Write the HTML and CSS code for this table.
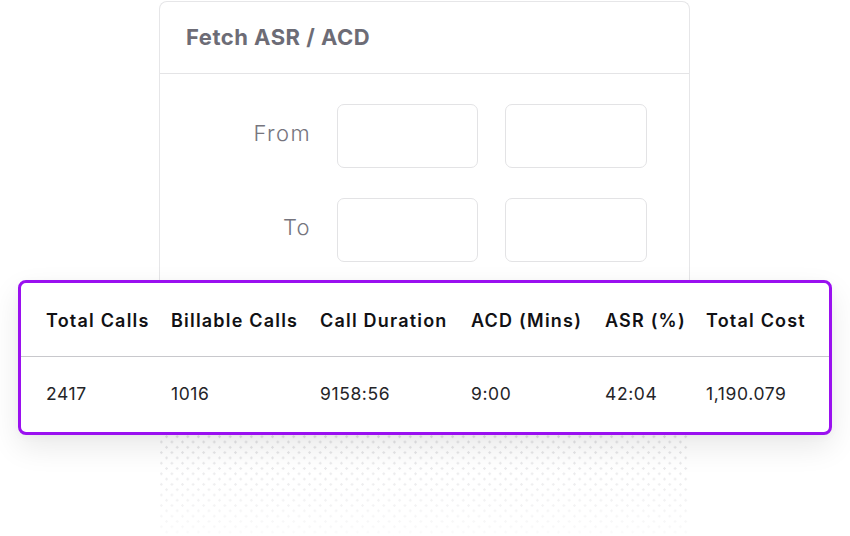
FILE: index.html
```html
<!DOCTYPE html>
<html>
<head>
<meta charset="utf-8">
<link rel="stylesheet" href="styles.css">
</head>
<body>
<div class="stage">
  <div class="card">
    <div class="card-head">Fetch ASR / ACD</div>
    <div class="card-body">
      <div class="label">From</div>
      <div class="field"></div>
      <div class="field"></div>
      <div class="label">To</div>
      <div class="field"></div>
      <div class="field"></div>
    </div>
  </div>
  <div class="dots"></div>

  <div class="result">
    <div class="row head">
      <div>Total Calls</div>
      <div>Billable Calls</div>
      <div>Call Duration</div>
      <div>ACD (Mins)</div>
      <div>ASR (%)</div>
      <div>Total Cost</div>
    </div>
    <div class="row data">
      <div>2417</div>
      <div>1016</div>
      <div>9158:56</div>
      <div>9:00</div>
      <div>42:04</div>
      <div>1,190.079</div>
    </div>
  </div>
</div>
</body>
</html>
```

FILE: styles.css
```css
* { box-sizing: border-box; }

html, body {
  margin: 0;
  padding: 0;
  background: #ffffff;
  width: 850px;
  height: 536px;
  overflow: hidden;
  font-family: "Inter", "Noto Sans", sans-serif;
}

.stage {
  position: relative;
  width: 850px;
  height: 536px;
  padding-top: 1px;
}

.card {
  margin-left: 159px;
  width: 531px;
  height: 300px;
  border: 1px solid #e6e6e8;
  border-bottom: none;
  border-radius: 8px 8px 0 0;
  background: #fff;
}

.card-head {
  height: 72px;
  border-bottom: 1px solid #e4e4e6;
  padding-left: 26px;
  padding-bottom: 2px;
  display: flex;
  align-items: center;
  font-size: 22px;
  font-weight: 700;
  color: #6d6c76;
  letter-spacing: 0.5px;
}

.card-body {
  display: grid;
  grid-template-columns: 150px 141px 142px;
  grid-auto-rows: 64px;
  column-gap: 27px;
  row-gap: 30px;
  padding-top: 30px;
}

.label {
  display: flex;
  align-items: center;
  justify-content: flex-end;
  margin-right: -1px;
  padding-bottom: 6px;
  font-size: 22px;
  font-weight: 300;
  letter-spacing: 1.4px;
  color: #76757e;
}

.field {
  border: 1px solid #e3e3e5;
  border-radius: 7px;
  background: #fff;
}

.dots {
  margin-left: 160px;
  width: 529px;
  height: 235px;
  background-image:
    radial-gradient(circle, #e2e2e4 1.1px, transparent 1.4px),
    radial-gradient(circle, #e2e2e4 1.1px, transparent 1.4px);
  background-size: 10.6px 10.6px, 10.6px 10.6px;
  background-position: -4px -2px, 1.3px 3.3px;
  -webkit-mask-image: linear-gradient(to bottom, #000 0, #000 135px, rgba(0,0,0,0.15) 235px);
  mask-image: linear-gradient(to bottom, #000 0, #000 135px, rgba(0,0,0,0.15) 235px);
}

.result {
  position: absolute;
  left: 18px;
  top: 280px;
  width: 814px;
  height: 155px;
  border: 3px solid #9a10f0;
  border-radius: 8px;
  background: #fff;
  box-shadow: 0 12px 30px rgba(0, 0, 0, 0.09), 0 2px 8px rgba(0, 0, 0, 0.03);
}

.row {
  display: grid;
  grid-template-columns: 125px 149px 151px 134px 101px 1fr;
  padding: 0 20px 0 25px;
  align-items: center;
  white-space: nowrap;
}

.row.head {
  height: 74px;
  padding-top: 2px;
  border-bottom: 1px solid #c8c8cc;
  font-size: 18px;
  font-weight: 600;
  color: #111114;
  letter-spacing: 1.2px;
}

.row.data {
  height: 72px;
  font-size: 17.5px;
  font-weight: 400;
  color: #242428;
  letter-spacing: 0.6px;
}
```
